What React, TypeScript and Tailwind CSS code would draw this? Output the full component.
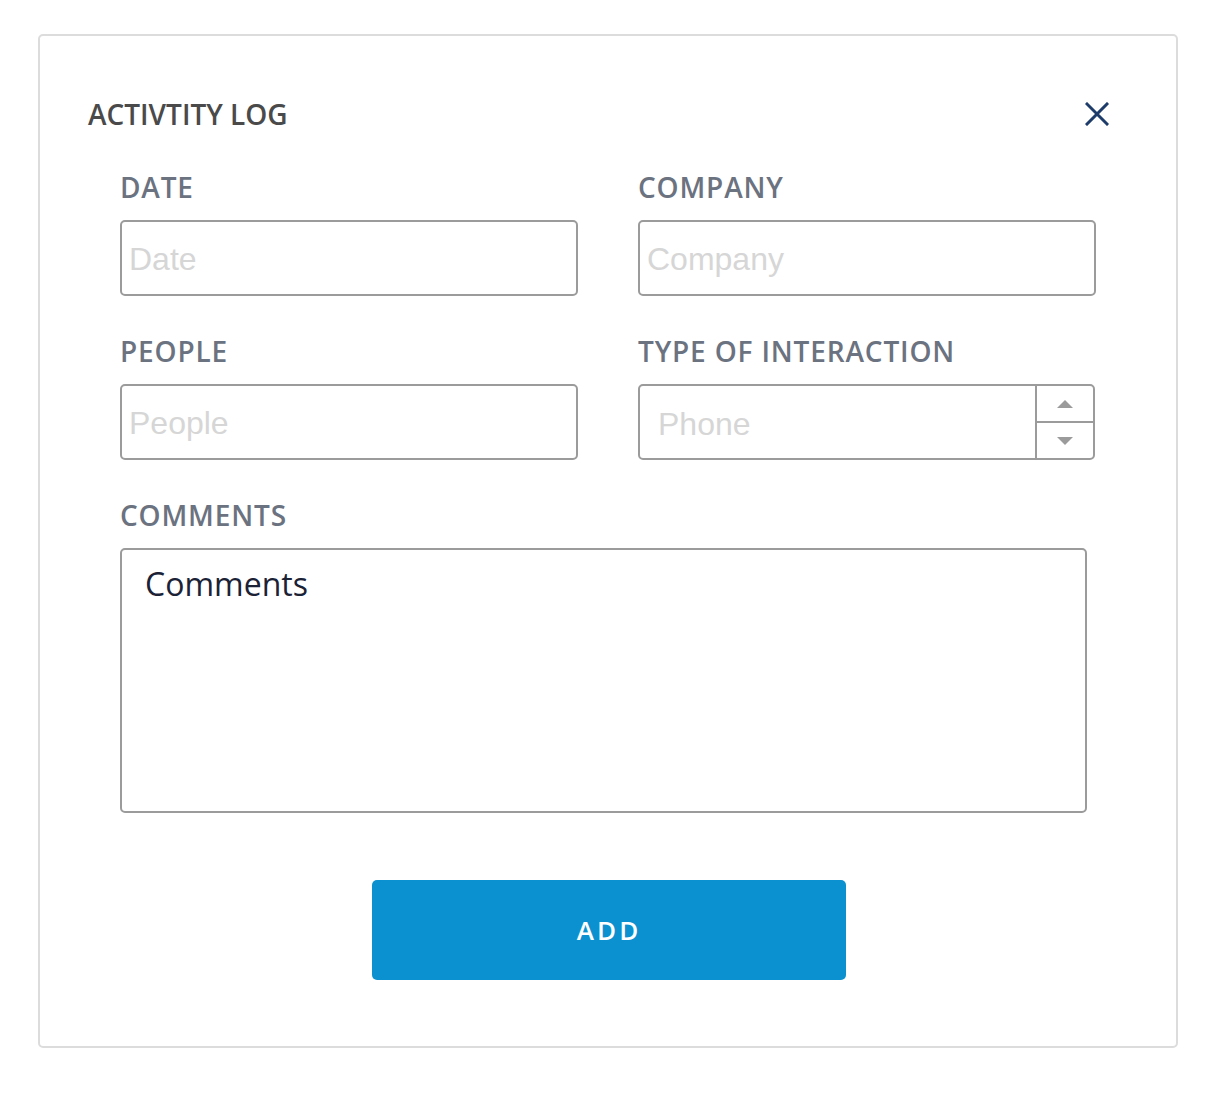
import React from 'react';

const label = "block font-['Open_Sans',sans-serif] text-[28px] leading-[36px] font-semibold tracking-[0.03em] text-[#6b7280]";
const input =
  "block h-[76px] w-[458px] rounded-[5px] border-2 border-[#9b9b9b] bg-white pl-[7px] pt-[3px] font-['Liberation_Sans',Arial,sans-serif] text-[32px] text-[#333] outline-none placeholder:text-[#d6d6d6]";

function Field({ name, children }: { name: string; children: React.ReactNode }) {
  return (
    <div className="flex flex-col">
      <span className={label}>{name}</span>
      <div className="mt-[15px]">{children}</div>
    </div>
  );
}

export default function App() {
  return (
    <div className="min-h-[1100px] bg-white pl-[38px] pt-[34px]">
      <div className="flex h-[1014px] w-[1140px] flex-col rounded-[5px] border-2 border-[#dcdcdc] bg-white pl-[48px] pt-[59px]">
        <div className="flex items-center justify-between pr-[66px]">
          <h1 className="font-['Open_Sans',sans-serif] text-[28px] font-semibold leading-[38px] text-[#4a4a4a]">
            ACTIVTITY LOG
          </h1>
          <button aria-label="Close" className="flex h-[26px] w-[26px] items-center justify-center">
            <svg width="24" height="24" viewBox="0 0 24 24" fill="none" stroke="#1d3c6a" strokeWidth="3" strokeLinecap="square">
              <path d="M2 2L22 22M22 2L2 22" />
            </svg>
          </button>
        </div>

        <div className="ml-[32px] mt-[36px] grid w-[976px] grid-cols-[458px_458px] gap-x-[60px] gap-y-[37px]">
          <Field name="DATE">
            <input className={input} placeholder="Date" />
          </Field>
          <Field name="COMPANY">
            <input className={input} placeholder="Company" />
          </Field>
          <Field name="PEOPLE">
            <input className={input} placeholder="People" />
          </Field>
          <Field name="TYPE OF INTERACTION">
            <div className="flex h-[76px] w-[457px] overflow-hidden rounded-[5px] border-2 border-[#9b9b9b]">
              <input
                className="min-w-0 flex-1 pl-[18px] pt-[3px] font-['Liberation_Sans',Arial,sans-serif] text-[32px] outline-none placeholder:text-[#d6d6d6]"
                placeholder="Phone"
              />
              <div className="flex w-[58px] flex-col border-l-2 border-[#9b9b9b]">
                <div className="flex flex-1 items-center justify-center border-b-2 border-[#9b9b9b]">
                  <svg width="16" height="8" viewBox="0 0 16 8"><path d="M8 0L16 8H0Z" fill="#9b9b9b" /></svg>
                </div>
                <div className="flex flex-1 items-center justify-center">
                  <svg width="16" height="8" viewBox="0 0 16 8"><path d="M0 0H16L8 8Z" fill="#9b9b9b" /></svg>
                </div>
              </div>
            </div>
          </Field>
          <div className="col-span-2">
            <Field name="COMMENTS">
              <textarea
                className="block h-[265px] w-[967px] resize-none rounded-[5px] border-2 border-[#9b9b9b] px-[23px] pt-[13px] font-['Open_Sans',sans-serif] text-[32px] leading-[42px] text-[#1b2236] outline-none placeholder:text-[#1b2236]"
                placeholder="Comments"
              />
            </Field>
          </div>
        </div>

        <div className="mt-[67px] flex justify-center pr-[46px]">
          <button className="h-[100px] w-[474px] rounded-[5px] bg-[#0b91d0] font-['Open_Sans',sans-serif] text-[26px] font-semibold tracking-[0.12em] text-white">
            ADD
          </button>
        </div>
      </div>
    </div>
  );
}
